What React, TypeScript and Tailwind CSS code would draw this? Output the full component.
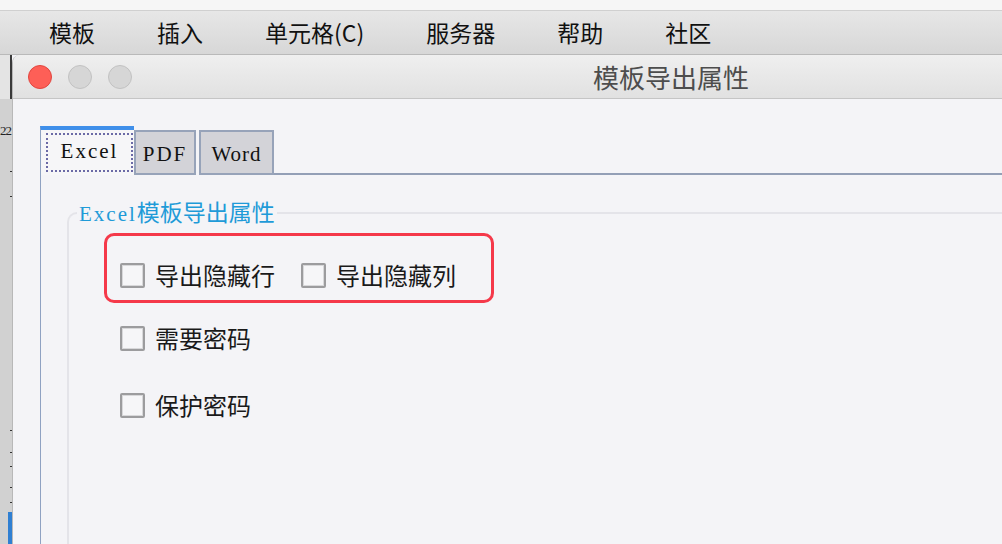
import React from "react";

const cjk = "font-['Noto_Sans_CJK_SC',sans-serif]";
const serif = "font-['Liberation_Serif','Noto_Sans_CJK_SC',serif]";

const menuItems = ["模板", "插入", "单元格(C)", "服务器", "帮助", "社区"];

function Checkbox({ label }: { label: string }) {
	return (
		<label className="flex items-center gap-[10px]">
			<span className="w-[25px] h-[25px] rounded-[2px] border-2 border-[#9c9c9e] bg-[#f6f6f8] shadow-[inset_0_0_0_1px_#d8d8da]" />
			<span className={`${cjk} text-[24px] leading-[26px] text-[#1a1a1a]`}>{label}</span>
		</label>
	);
}

export default function App() {
	return (
		<div className="w-[1002px] h-[544px] overflow-hidden flex flex-col bg-[#f4f4f7]">
			{/* top strip of the parent window */}
			<div className="h-[11px] bg-[#f6f6f6] border-b border-[#d0d0d0]" />

			{/* menu bar */}
			<div className="h-[44px] flex items-center gap-[62px] pl-[49px] bg-gradient-to-b from-[#e7e7e7] to-[#d7d7d7] border-b border-[#b9b9b9]">
				{menuItems.map((m) => (
					<span key={m} className={`${cjk} text-[23px] leading-none text-[#111]`}>
						{m}
					</span>
				))}
			</div>

			<div className="flex flex-1 min-h-0">
				{/* ruler strip at the left of the parent window */}
				<div className="relative w-[12px] bg-[#d1d1d1] flex flex-col overflow-hidden">
					<div className="h-[44px] border-r-2 border-[#3a3a3a] bg-[#e4e4e4]" />
					<div className="mt-[22px] h-[20px] flex">
						<span className="font-['Liberation_Serif',serif] text-[13px] leading-[20px] text-[#222] tracking-[-1px]">
							22
						</span>
					</div>
					<span className="absolute right-0 top-[116px] w-[2px] h-[1px] bg-[#333]" />
					<span className="absolute right-0 top-[141px] w-[2px] h-[1px] bg-[#333]" />
					<span className="absolute right-0 top-[375px] w-[2px] h-[1px] bg-[#333]" />
					<span className="absolute right-0 top-[397px] w-[2px] h-[1px] bg-[#333]" />
					<span className="absolute right-0 top-[411px] w-[2px] h-[1px] bg-[#333]" />
					<span className="absolute right-0 top-[432px] w-[2px] h-[1px] bg-[#333]" />
					<span className="absolute right-0 top-[447px] w-[2px] h-[1px] bg-[#333]" />
					<div className="mt-auto self-end w-[4px] h-[32px] bg-[#2f7fd2]" />
				</div>

				{/* dialog */}
				<div className="flex-1 flex flex-col rounded-tl-[8px] overflow-hidden bg-[#f4f4f7] border-l border-[#b8b8b8]">
					{/* title bar */}
					<div className="h-[44px] shrink-0 flex items-center pl-[15px] bg-gradient-to-b from-[#efefef] to-[#e1e1e1] border-b border-[#c5c5c5]">
						<div className="flex gap-[16px]">
							<span className="w-[24px] h-[24px] rounded-full bg-[#fe5f57] border border-[#e1463f]" />
							<span className="w-[24px] h-[24px] rounded-full bg-[#d6d6d6] border border-[#c2c2c2]" />
							<span className="w-[24px] h-[24px] rounded-full bg-[#d6d6d6] border border-[#c2c2c2]" />
						</div>
						<span className={`${cjk} ml-[461px] text-[26px] leading-none text-[#4d4d4d]`}>
							模板导出属性
						</span>
					</div>

					{/* content */}
					<div className="flex-1 flex flex-col pt-[27px] pl-[27px]">
						{/* tabs */}
						<div className="flex items-end h-[49px]">
							<div className="w-[94px] h-[49px] bg-[#f6f6f8] border-t-4 border-t-[#3f8fea] border-l border-l-[#8fa2c2] pl-[5px] pt-[3px]">
								<div className="w-[87px] h-[39px] border-2 border-dotted border-[#6b6aa6] flex items-center justify-center">
									<span className={`${serif} text-[21px] leading-none tracking-[2px] text-[#111] mb-[3px]`}>Excel</span>
								</div>
							</div>
							<div className="w-[62px] h-[45px] bg-[#d3d3d8] border-2 border-[#97a3b9] flex items-center justify-center">
								<span className={`${serif} text-[21px] leading-none tracking-[2px] text-[#111] mt-[3px]`}>PDF</span>
							</div>
							<div className="ml-[3px] w-[75px] h-[45px] bg-[#d3d3d8] border-2 border-[#97a3b9] flex items-center justify-center">
								<span className={`${serif} text-[21px] leading-none tracking-[1px] text-[#111] mt-[3px]`}>Word</span>
							</div>
							<div className="flex-1 border-b-2 border-[#939fb6]" />
						</div>

						{/* tab panel */}
						<div className="flex-1 border-l border-[#8fa2c2] pl-[26px] pt-[23px]">
							<fieldset className="h-full border-t-2 border-l-2 border-[#e4e4e9] rounded-tl-[10px] p-0 m-0">
								<legend className="ml-[8px] px-[2px] leading-[26px] text-[#1f9bd8]">
									<span className={`${serif} text-[21px] tracking-[2px]`}>Excel</span>
									<span className={`${cjk} text-[23px]`}>模板导出属性</span>
								</legend>

								<div className="flex flex-col items-start pt-[5px] pl-[35px]">
									{/* highlighted options */}
									<div className="w-[390px] h-[70px] border-[3px] border-[#f5394a] rounded-[10px] flex gap-[26px] pl-[13px] pt-[14px]">
										<Checkbox label="导出隐藏行" />
										<Checkbox label="导出隐藏列" />
									</div>
									<div className="mt-[22px] ml-[16px] flex flex-col gap-[41px]">
										<Checkbox label="需要密码" />
										<Checkbox label="保护密码" />
									</div>
								</div>
							</fieldset>
						</div>
					</div>
				</div>
			</div>
		</div>
	);
}
